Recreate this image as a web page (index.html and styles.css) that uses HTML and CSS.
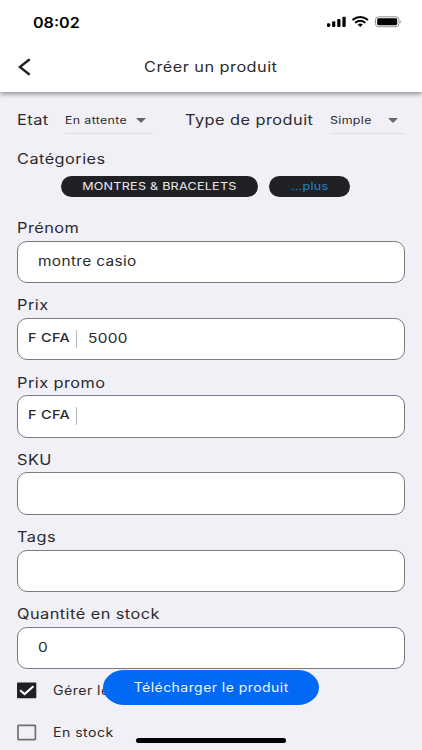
FILE: index.html
```html
<!DOCTYPE html>
<html lang="fr">
<head>
<meta charset="utf-8">
<title>Créer un produit</title>
<link rel="stylesheet" href="styles.css">
</head>
<body>
<div class="screen">
  <header class="header">
    <div class="status">
      <span class="time wide">08:02</span>
      <svg class="signals" width="76" height="12" viewBox="0 0 76 12">
        <g fill="#000"><rect x="0" y="7.3" width="3.2" height="3.7" rx="1"/><rect x="5.1" y="5.3" width="3.2" height="5.7" rx="1"/><rect x="10.2" y="3" width="3.3" height="8" rx="1"/><rect x="15.4" y=".7" width="3.3" height="10.3" rx="1"/></g>
        <g fill="none" stroke="#000" stroke-width="1.9"><path d="M25.4 4.1Q33.2-2.1 41 4.1"/><path d="M28.1 6.8Q33.2 2.6 38.3 6.8"/></g>
        <path d="M30.6 8.4Q33.2 6.5 35.8 8.4L33.2 10.9z"/>
        <rect x="48.5" y=".8" width="23.5" height="9.9" rx="3" fill="none" stroke="#929292" stroke-width="1"/>
        <rect x="50.2" y="2.3" width="20" height="6.9" rx="1.4"/><path d="M73.4 4.1Q75.1 5.7 73.4 7.4z" fill="#888"/>
      </svg>
    </div>
    <div class="titlebar">
      <svg class="back" width="14" height="18" viewBox="0 0 14 18"><path d="M11.7 1.2L1.8 9L11.7 16.8" fill="none" stroke="#202124" stroke-width="2.4"/></svg>
      <h1 class="title wide">Créer un produit</h1>
    </div>
  </header>
  <main class="form">
    <div class="selectors">
      <div class="state"><span class="label wide">Etat</span></div>
      <div class="select select-state"><span class="value wide">En attente</span><i class="caret"></i></div>
      <div class="kind"><span class="label type-label wide">Type de produit</span></div>
      <div class="select select-kind"><span class="value wide">Simple</span><i class="caret"></i></div>
    </div>
    <div class="categories"><span class="label cat-label wide">Catégories</span></div>
    <div class="chips"><div class="chip chip-main"><span class="wide">MONTRES &amp; BRACELETS</span></div><div class="chip chip-more"><span class="wide">...plus</span></div></div>
    <div class="group"><span class="label wide">Prénom</span><div class="field"><span class="input wide">montre casio</span></div></div>
    <div class="group"><span class="label wide">Prix</span><div class="field money"><span class="currency wide">F CFA</span><i class="bar"></i><span class="input wide">5000</span></div></div>
    <div class="group"><span class="label wide">Prix promo</span><div class="field money"><span class="currency wide">F CFA</span><i class="bar"></i></div></div>
    <div class="group"><span class="label wide">SKU</span><div class="field"></div></div>
    <div class="group"><span class="label wide">Tags</span><div class="field"></div></div>
    <div class="group"><span class="label wide">Quantité en stock</span><div class="field"><span class="input wide">0</span></div></div>
    <div class="check"><svg width="20" height="17" viewBox="0 0 20 17"><rect y=".5" width="19.3" height="15.8" rx=".8" fill="#202124"/><path d="M3.1 8.2L7.6 12.1L16.4 4.3" fill="none" stroke="#fff" stroke-width="2"/></svg><span class="check-label wide">Gérer le stock</span></div>
    <div class="check"><svg width="20" height="17" viewBox="0 0 20 17"><rect x="1" y="1.4" width="17.4" height="14.2" rx=".5" fill="none" stroke="#707074" stroke-width="1.7"/></svg><span class="check-label wide">En stock</span></div>
  </main>
  <button class="upload"><span class="wide">Télécharger le produit</span></button>
  <div class="home"></div>
</div>
</body>
</html>
```
FILE: styles.css
```css
* { box-sizing: border-box; }
body { margin: 0; background: #f1f0f6; color: #2a2a2d; font-family: Inter, "Liberation Sans", sans-serif; }
.screen { position: relative; width: 422px; height: 750px; overflow: hidden; }
.wide { display: block; flex: none; white-space: nowrap; transform: scaleX(1.2); transform-origin: left center; }
.header { height: 92px; background: #fff; box-shadow: 0 2px 5px rgba(0,0,0,.42); }
.status { display: flex; justify-content: space-between; height: 44px; padding: 16px 19px 0 33px; }
.time { font-size: 14px; line-height: 13px; font-weight: 600; color: #000; transform: scaleX(1.15); }
.titlebar { display: flex; height: 45px; align-items: center; padding-left: 18px; }
.title { margin: 0 0 0 112px; font-size: 14px; font-weight: 400; letter-spacing: .4px; transform: scaleX(1.165); }
.form { padding: 0 17px 0 16.5px; }
.label { font-size: 14px; line-height: 20px; letter-spacing: .4px; transform: scaleX(1.165); }
.selectors { display: flex; height: 57px; padding-top: 14px; align-items: flex-start; }
.selectors .label { line-height: 27px; }
.state { width: 48.5px; }
.kind { width: 145px; }
.select { display: flex; height: 28px; align-items: center; justify-content: space-between; border-bottom: 1px solid #dfdee4; }
.select-state { width: 88px; margin-right: 32px; padding-right: 7px; }
.select-kind { width: 75px; padding-right: 7px; }
.value { width: 30px; font-size: 10.5px; letter-spacing: .3px; transform: scaleX(1.18); position: relative; top: 1px; }
.caret { border: 5.5px solid transparent; border-top: 5px solid #66666a; border-bottom: 0; position: relative; top: 1px; }
.categories { height: 27px; }
.chips { display: flex; gap: 11px; height: 42px; padding-left: 44px; }
.chip { display: flex; height: 21px; align-items: center; justify-content: center; border-radius: 11px; background: #202124; color: #ececef; font-size: 10.5px; letter-spacing: .2px; }
.chip .wide, .upload .wide { transform-origin: center; }
.chip-main { width: 197.5px; }
.chip-more { width: 81px; color: #2684d2; }
.group { height: 77.3px; }
.group .label { height: 22.5px; }
.field { display: flex; align-items: center; height: 42.5px; border: 1px solid #7b7b7e; border-radius: 10px; background: #fff; padding: 0 0 2px 20.5px; }
.group > .label, .categories > .label { width: 150px; }
.input { font-size: 13px; letter-spacing: .3px; transform: scaleX(1.185); }
.money { padding-left: 10px; }
.currency { width: 48px; font-size: 12px; font-weight: 500; letter-spacing: .3px; position: relative; top: -1px; }
.bar { width: 1px; height: 18px; margin: 2px 11px 0 0; background: #bcbcc0; }
.check { display: flex; height: 42.5px; align-items: flex-start; }
.check svg { flex: none; }
.check-label { margin-left: 16px; font-size: 12.5px; line-height: 17px; letter-spacing: .4px; transform: scaleX(1.13); }
.upload { position: absolute; left: 103px; top: 669.5px; display: flex; width: 216px; height: 35.5px; align-items: center; justify-content: center; border: 0; border-radius: 22px / 18px; padding: 0; background: #0269f6; color: #edf3ff; font: 12.5px Inter, sans-serif; letter-spacing: .4px; }
.upload .wide { transform: scaleX(1.12); }
.home { position: absolute; left: 136px; top: 738px; width: 150px; height: 4.5px; border-radius: 3px; background: #000; }
```
